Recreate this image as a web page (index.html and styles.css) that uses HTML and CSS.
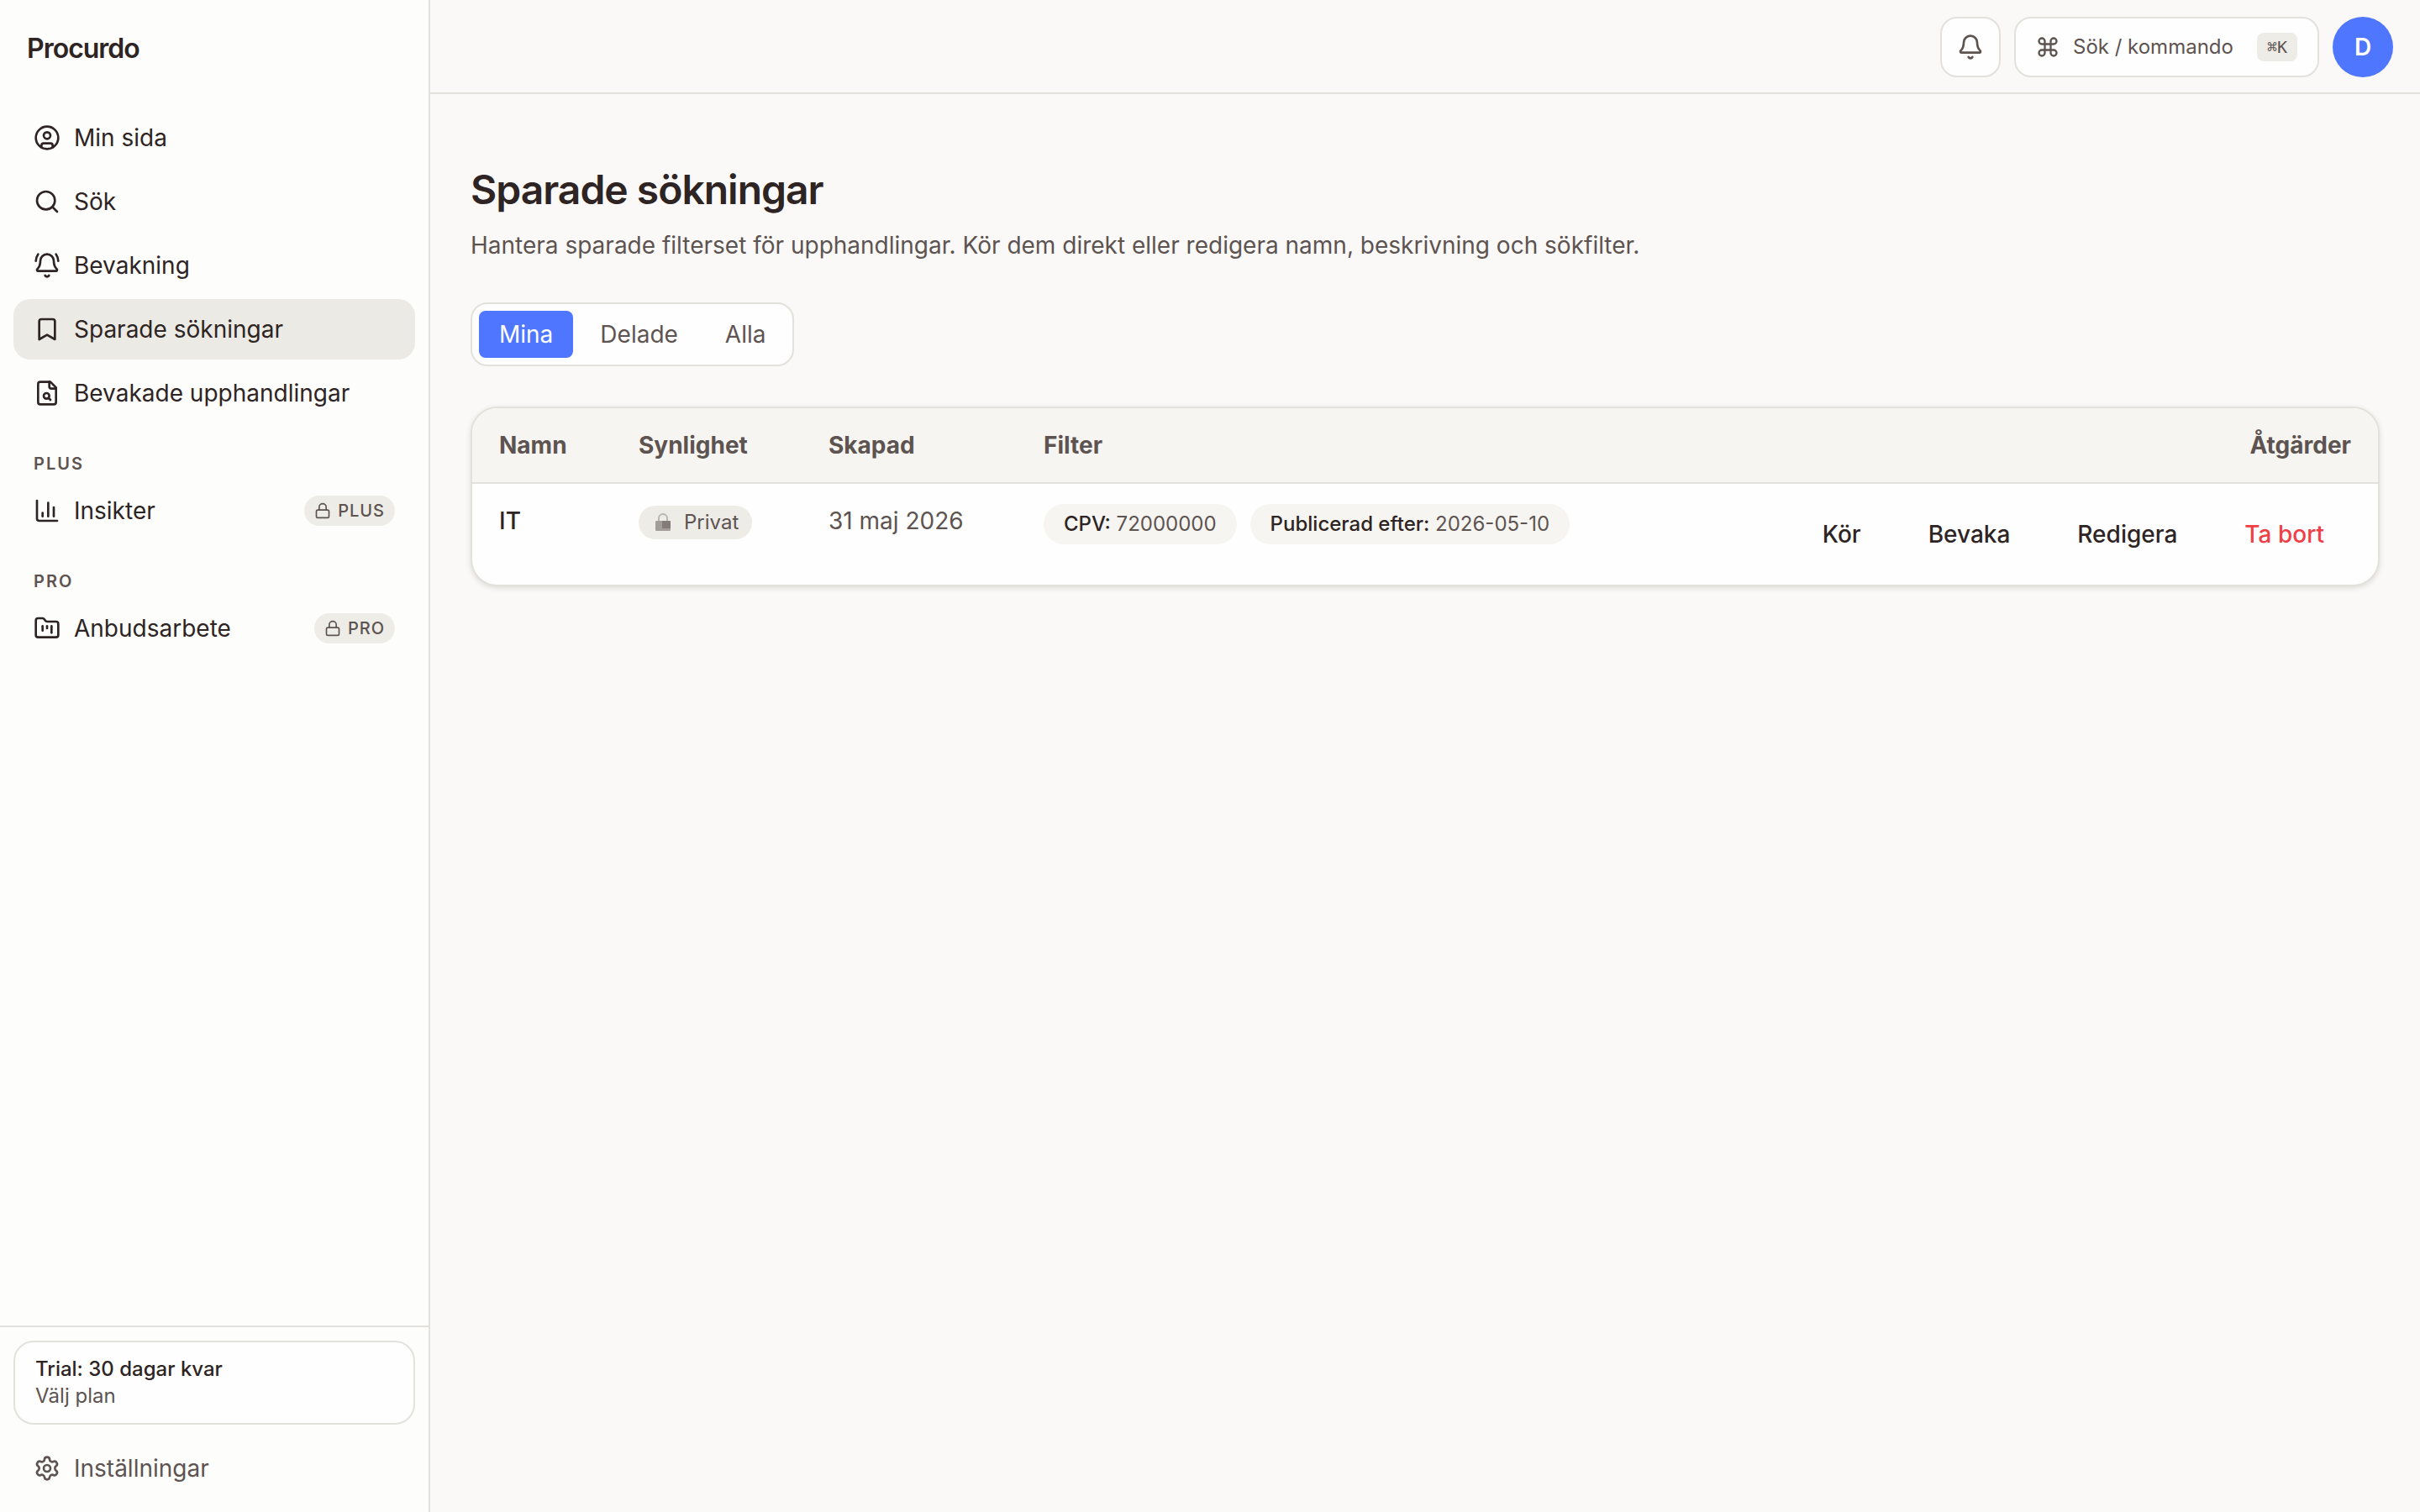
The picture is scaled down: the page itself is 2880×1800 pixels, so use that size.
FILE: index.html
```html
<!DOCTYPE html>
<html lang="sv">
<head>
  <meta charset="UTF-8">
  <meta name="viewport" content="width=device-width, initial-scale=1.0">
  <title>Sparade sökningar - Procurdo</title>
  <link rel="stylesheet" href="styles.css">
</head>
<body>
  <aside class="sidebar">
    <a class="logo" href="#">Procurdo</a>
    <nav class="nav">
      <a class="nav-item" href="#">
        <svg class="icon" viewBox="0 0 24 24"><path d="M7 20.500V19a2 2 0 0 1 2-2h6a2 2 0 0 1 2 2v1.500"/><circle cx="12" cy="10" r="3"/><circle cx="12" cy="12" r="10"/></svg>
        Min sida
      </a>
      <a class="nav-item" href="#">
        <svg class="icon" viewBox="0 0 24 24"><circle cx="11" cy="11" r="8"/><path d="m21 21-4.3-4.3"/></svg>
        Sök
      </a>
      <a class="nav-item" href="#">
        <svg class="icon" viewBox="0 0 24 24"><path d="M10.268 21a2 2 0 0 0 3.464 0"/><path d="M22 8c0-2.3-.8-4.3-2-6"/><path d="M3.262 15.326A1 1 0 0 0 4 17h16a1 1 0 0 0 .74-1.673C19.41 13.956 18 12.499 18 8A6 6 0 0 0 6 8c0 4.499-1.411 5.956-2.738 7.326"/><path d="M4 2C2.8 3.7 2 5.7 2 8"/></svg>
        Bevakning
      </a>
      <a class="nav-item active" href="#" aria-current="page">
        <svg class="icon" viewBox="0 0 24 24"><path d="m19 21-7-4-7 4V5a2 2 0 0 1 2-2h10a2 2 0 0 1 2 2v16z"/></svg>
        Sparade sökningar
      </a>
      <a class="nav-item" href="#">
        <svg class="icon" viewBox="0 0 24 24"><path d="M15 2H6a2 2 0 0 0-2 2v16a2 2 0 0 0 2 2h12a2 2 0 0 0 2-2V7Z"/><path d="M14 2v4a2 2 0 0 0 2 2h4"/><circle cx="11.5" cy="14.5" r="2.5"/><path d="M13.3 16.3 15 18"/></svg>
        Bevakade upphandlingar
      </a>

      <h2 class="nav-label">PLUS</h2>
      <a class="nav-item" href="#">
        <svg class="icon" viewBox="0 0 24 24"><path d="M3 3v16a2 2 0 0 0 2 2h16"/><path d="M18 17V9"/><path d="M13 17V5"/><path d="M8 17v-3"/></svg>
        Insikter
        <span class="plan-badge">
          <svg class="icon-small" viewBox="0 0 24 24"><rect width="18" height="11" x="3" y="11" rx="2"/><path d="M7 11V7a5 5 0 0 1 10 0v4"/></svg>
          PLUS
        </span>
      </a>

      <h2 class="nav-label">PRO</h2>
      <a class="nav-item" href="#">
        <svg class="icon" viewBox="0 0 24 24"><path d="M4 20h16a2 2 0 0 0 2-2V8a2 2 0 0 0-2-2h-7.93a2 2 0 0 1-1.66-.9l-.82-1.2A2 2 0 0 0 7.93 3H4a2 2 0 0 0-2 2v13c0 1.1.9 2 2 2Z"/><path d="M8 10v4"/><path d="M12 10v2"/><path d="M16 10v6"/></svg>
        Anbudsarbete
        <span class="plan-badge">
          <svg class="icon-small" viewBox="0 0 24 24"><rect width="18" height="11" x="3" y="11" rx="2"/><path d="M7 11V7a5 5 0 0 1 10 0v4"/></svg>
          PRO
        </span>
      </a>
    </nav>
    <div class="sidebar-footer">
      <a class="trial" href="#">
        <strong>Trial: 30 dagar kvar</strong>
        <span>Välj plan</span>
      </a>
      <a class="nav-item muted" href="#">
        <svg class="icon" viewBox="0 0 24 24"><path d="M9.671 4.136a2.34 2.34 0 0 1 4.659 0 2.34 2.34 0 0 0 3.319 1.915 2.34 2.34 0 0 1 2.33 4.033 2.34 2.34 0 0 0 0 3.831 2.34 2.34 0 0 1-2.33 4.033 2.34 2.34 0 0 0-3.319 1.915 2.34 2.34 0 0 1-4.659 0 2.34 2.34 0 0 0-3.32-1.915 2.34 2.34 0 0 1-2.33-4.033 2.34 2.34 0 0 0 0-3.831A2.34 2.34 0 0 1 6.35 6.051a2.34 2.34 0 0 0 3.319-1.915"/><circle cx="12" cy="12" r="3"/></svg>
        Inställningar
      </a>
    </div>
  </aside>

  <div class="page">
    <header class="topbar">
      <button class="icon-button" type="button" aria-label="Notiser">
        <svg class="icon" viewBox="0 0 24 24"><path d="M10.268 21a2 2 0 0 0 3.464 0"/><path d="M3.262 15.326A1 1 0 0 0 4 17h16a1 1 0 0 0 .74-1.673C19.41 13.956 18 12.499 18 8A6 6 0 0 0 6 8c0 4.499-1.411 5.956-2.738 7.326"/></svg>
      </button>
      <button class="command" type="button">
        <svg class="icon-medium" viewBox="0 0 24 24"><path d="M15 6v12a3 3 0 1 0 3-3H6a3 3 0 1 0 3 3V6a3 3 0 1 0-3 3h12a3 3 0 1 0-3-3"/></svg>
        Sök / kommando
        <kbd>⌘K</kbd>
      </button>
      <button class="avatar" type="button">D</button>
    </header>

    <main>
      <h1>Sparade sökningar</h1>
      <p class="intro">Hantera sparade filterset för upphandlingar. Kör dem direkt eller redigera namn, beskrivning och sökfilter.</p>

      <div class="tabs" role="tablist">
        <button class="tab selected" type="button" role="tab" aria-selected="true">Mina</button>
        <button class="tab" type="button" role="tab" aria-selected="false">Delade</button>
        <button class="tab" type="button" role="tab" aria-selected="false">Alla</button>
      </div>

      <div class="table-card">
        <table>
          <thead>
            <tr>
              <th class="col-name">Namn</th>
              <th class="col-visibility">Synlighet</th>
              <th class="col-created">Skapad</th>
              <th>Filter</th>
              <th class="col-actions">Åtgärder</th>
            </tr>
          </thead>
          <tbody>
            <tr>
              <td class="name">IT</td>
              <td>
                <span class="visibility">
                  <svg class="padlock" viewBox="0 0 18 22"><path class="shackle" d="M4 10V6a5 5 0 0 1 10 0v4"/><rect class="lock-body" x="0" y="9" width="18" height="12" rx="1"/><path class="lock-shade" d="M8 9h9a1 1 0 0 1 1 1v8H8z"/></svg>
                  Privat
                </span>
              </td>
              <td>31 maj 2026</td>
              <td>
                <div class="filters">
                  <span class="filter"><b>CPV:</b> 72000000</span>
                  <span class="filter"><b>Publicerad efter:</b> 2026-05-10</span>
                </div>
              </td>
              <td>
                <div class="actions">
                  <button type="button">Kör</button>
                  <button type="button">Bevaka</button>
                  <button type="button">Redigera</button>
                  <button class="danger" type="button">Ta bort</button>
                </div>
              </td>
            </tr>
          </tbody>
        </table>
      </div>
    </main>
  </div>
</body>
</html>
```
FILE: styles.css
```css
* {
  box-sizing: border-box;
}

body {
  display: flex;
  min-height: 100vh;
  margin: 0;
  background-color: #faf9f7;
  color: #2d2423;
  font-family: Inter, "Liberation Sans", sans-serif;
  font-size: 28px;
  line-height: 40px;
}

a {
  color: inherit;
  text-decoration: none;
}

button {
  border: none;
  background: none;
  color: inherit;
  font: inherit;
  cursor: pointer;
}

svg {
  flex-shrink: 0;
  fill: none;
  stroke: currentColor;
  stroke-width: 2;
  stroke-linecap: round;
  stroke-linejoin: round;
}

.icon {
  width: 32px;
  height: 32px;
}

.icon-medium {
  width: 28px;
  height: 28px;
}

.icon-small {
  width: 20px;
  height: 20px;
}

/* Sidebar */
.sidebar {
  display: flex;
  flex-direction: column;
  flex-shrink: 0;
  width: 512px;
  border-right: 2px solid #e2e1dc;
  background-color: #fdfdfc;
}

.logo {
  padding: 38px 32px 34px;
  font-size: 32px;
  font-weight: 600;
  letter-spacing: -1px;
}

.nav {
  display: flex;
  flex: 1;
  flex-direction: column;
  gap: 4px;
  padding: 16px;
}

.nav-item {
  display: flex;
  align-items: center;
  gap: 16px;
  padding: 16px 24px;
  border-radius: 20px;
}

.nav-item.active {
  background-color: #eceae4;
}

.nav-label {
  margin: 0;
  padding: 28px 24px 0;
  color: #5d5351;
  font-size: 20px;
  font-weight: 600;
  line-height: 32px;
  letter-spacing: 2px;
}

.plan-badge {
  display: flex;
  align-items: center;
  gap: 8px;
  margin-left: auto;
  padding: 2px 12px;
  border-radius: 20px;
  background-color: #eeece6;
  color: #5d5351;
  font-size: 20px;
  font-weight: 500;
  line-height: 32px;
  letter-spacing: 1px;
}

.sidebar-footer {
  display: flex;
  flex-direction: column;
  gap: 16px;
  padding: 16px;
  border-top: 2px solid #e2e1dc;
}

.trial {
  display: flex;
  flex-direction: column;
  padding: 16px 24px;
  border: 2px solid #e2e1dc;
  border-radius: 24px;
  background-color: #fefefe;
  font-size: 24px;
  line-height: 32px;
}

.trial strong {
  font-weight: 500;
}

.trial span,
.muted {
  color: #5d5351;
}

/* Top bar */
.page {
  flex: 1;
  min-width: 0;
}

.topbar {
  display: flex;
  justify-content: flex-end;
  gap: 16px;
  padding: 20px 32px 18px;
  border-bottom: 2px solid #e2e1dc;
}

.icon-button,
.command {
  display: flex;
  align-items: center;
  height: 72px;
  border: 2px solid #e2e1dc;
  border-radius: 20px;
  background-color: #fefefe;
  color: #5d5351;
}

.icon-button {
  justify-content: center;
  width: 72px;
  padding: 0;
}

.command {
  gap: 16px;
  padding: 0 24px;
  font-size: 24px;
}

kbd {
  margin-left: 12px;
  padding: 0 12px;
  border-radius: 8px;
  background-color: #eeece6;
  font-family: "DejaVu Sans Mono", monospace;
  font-size: 20px;
  line-height: 34px;
}

.avatar {
  width: 72px;
  height: 72px;
  padding: 0;
  border-radius: 50%;
  background-color: #4f76ff;
  color: #fff;
  font-weight: 600;
}

/* Content */
main {
  padding: 82px 48px;
}

h1 {
  margin: 0;
  font-size: 48px;
  font-weight: 600;
  line-height: 64px;
  letter-spacing: -1px;
}

.intro {
  margin: 14px 0 48px;
  color: #5d5351;
}

.tabs {
  display: inline-flex;
  gap: 8px;
  padding: 8px;
  border: 2px solid #e2e1dc;
  border-radius: 20px;
  background-color: #fefefe;
}

.tab {
  padding: 8px 24px;
  border-radius: 8px;
  color: #5d5351;
}

.tab.selected {
  background-color: #4f76ff;
  color: #fff;
}

.table-card {
  margin-top: 48px;
  overflow: hidden;
  border: 2px solid #e2e1dc;
  border-radius: 32px;
  background-color: #fefefe;
  box-shadow: 0 2px 6px rgba(60, 50, 30, 0.15);
}

table {
  width: 100%;
  border-collapse: collapse;
}

th {
  padding: 24px 32px;
  border-bottom: 2px solid #e2e1dc;
  background-color: #f6f5f1;
  color: #5d5351;
  font-weight: 700;
  text-align: left;
}

td {
  padding: 24px 32px;
  color: #5d5351;
  vertical-align: top;
}

.col-name {
  width: 166px;
}

.col-visibility {
  width: 226px;
}

.col-created {
  width: 256px;
}

.col-actions {
  text-align: right;
}

td.name {
  color: #2d2423;
  font-weight: 500;
}

.visibility {
  display: inline-flex;
  align-items: center;
  gap: 16px;
  margin-top: 2px;
  padding: 4px 16px 4px 20px;
  border-radius: 20px;
  background-color: #eeece6;
  font-size: 24px;
  line-height: 32px;
}

.padlock {
  width: 18px;
  height: 22px;
}

.shackle {
  stroke: #b9b5b2;
}

.lock-body {
  fill: #a39d9a;
  stroke: none;
}

.lock-shade {
  fill: #837b78;
  stroke: none;
}

.filters {
  display: flex;
  flex-wrap: wrap;
  gap: 16px;
}

.filter {
  padding: 8px 24px;
  border-radius: 24px;
  background-color: #f6f5f1;
  font-size: 24px;
  line-height: 32px;
}

.filter b {
  color: #2d2423;
  font-weight: 500;
}

.actions {
  display: flex;
  justify-content: flex-end;
  gap: 16px;
}

.actions button {
  padding: 16px 32px;
  color: #2d2423;
  font-weight: 500;
}

.actions .danger {
  color: #ef4048;
}
```
